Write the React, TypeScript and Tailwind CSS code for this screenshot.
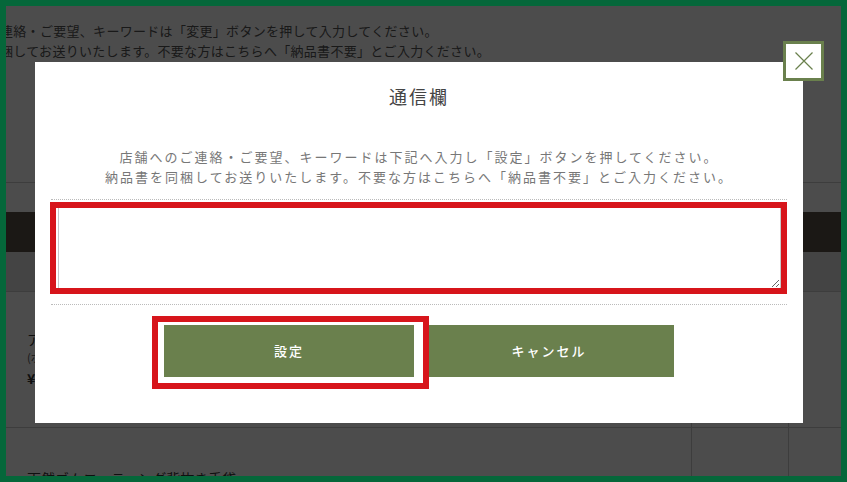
import { useState } from "react";

const Page = () => {
    return (
        <div className="text-[#555]">
            <div className="pt-[15px] -ml-[6px] text-[13px] leading-[20px] tracking-[0.3px] whitespace-nowrap">
                <p>連絡・ご要望、キーワードは「変更」ボタンを押して入力してください。</p>
                <p>梱してお送りいたします。不要な方はこちらへ「納品書不要」とご入力ください。</p>
            </div>
            <div className="mt-[121px] border-t border-[#ccc]" />
            <div className="mt-[29px] h-[40px] bg-[#5d5349]" />
            <div className="h-[40px] bg-[#e3e3e3] border-b border-[#ccc]" />
            <div className="h-[136px] flex border-b border-[#ccc]">
                <div className="w-[686px] border-r border-[#ccc] pl-[21px] pt-[37px]">
                    <p className="text-[14px] leading-[20px] text-[#333]">アームカバー ロングタイプ</p>
                    <p className="text-[11px] leading-[16px]">(ポイント 10pt)</p>
                    <p className="mt-[3px] text-[14px] leading-[20px] font-bold text-[#333]">¥1,100</p>
                </div>
                <div className="w-[97px] border-r border-[#ccc]" />
                <div className="flex-1" />
            </div>
            <div className="h-[60px] flex">
                <div className="w-[686px] border-r border-[#ccc] pl-[21px] pt-[40px]">
                    <p className="text-[14px] leading-[20px] text-[#333]">天然ゴムコーティング背抜き手袋</p>
                </div>
                <div className="w-[97px] border-r border-[#ccc]" />
                <div className="flex-1" />
            </div>
        </div>
    )
}

const Modal = () => {
    const [note, setNote] = useState("");

    return (
        <div className="absolute left-[29px] top-[56px] w-[768px] bg-white px-[16px] pt-[21px] pb-[46px]">
            <button className="absolute -right-[21px] -top-[21px] w-[41px] h-[40px] border-[3px] border-[#6a804d] bg-white flex items-center justify-center">
                <svg width="18" height="18" viewBox="0 0 18 18" fill="none" stroke="#6a804d" strokeWidth="1.2">
                    <path d="M0.5 0.5 L17.5 17.5 M17.5 0.5 L0.5 17.5" />
                </svg>
            </button>

            <h2 className="text-center text-[18px] leading-[26px] tracking-[2px] text-[#444]">通信欄</h2>

            <div className="mt-[38px] text-center text-[13px] leading-[20px] tracking-[2px] text-[#777]">
                <p>店舗へのご連絡・ご要望、キーワードは下記へ入力し「設定」ボタンを押してください。</p>
                <p>納品書を同梱してお送りいたします。不要な方はこちらへ「納品書不要」とご入力ください。</p>
            </div>

            <div className="mt-[12px] border-t border-dotted border-[#bbb]" />

            <div className="mt-[2px] -ml-px border-[6px] border-[#d7151b] h-[92px]">
                <textarea
                    value={note}
                    onChange={(e) => setNote(e.target.value)}
                    className="block ml-[2px] w-[723px] h-[80px] border-x border-[#c8c8c8] outline-none text-[13px]"
                />
            </div>

            <div className="mt-[10px] border-t border-dotted border-[#bbb]" />

            <div className="pt-[20px] flex justify-center gap-[10px]">
                <div className="relative">
                    <button className="w-[250px] h-[52px] bg-[#6a804d] text-white text-[13px] font-medium tracking-[2px]">
                        設定
                    </button>
                    <div className="absolute -left-[12px] -top-[9px] w-[277px] h-[73px] border-[6px] border-[#d7151b] z-10 pointer-events-none" />
                </div>
                <button className="w-[250px] h-[52px] bg-[#6a804d] text-white text-[13px] font-medium tracking-[2px]">
                    キャンセル
                </button>
            </div>
        </div>
    )
}

export default function App() {
    return (
        <div className="w-[847px] h-[482px] border-[6px] border-[#05673a] bg-white font-['Noto_Sans_CJK_JP',sans-serif]">
            <div className="relative w-full h-full overflow-hidden bg-white">
                <Page />
                <div className="absolute inset-0 bg-black/70" />
                <Modal />
            </div>
        </div>
    )
}
